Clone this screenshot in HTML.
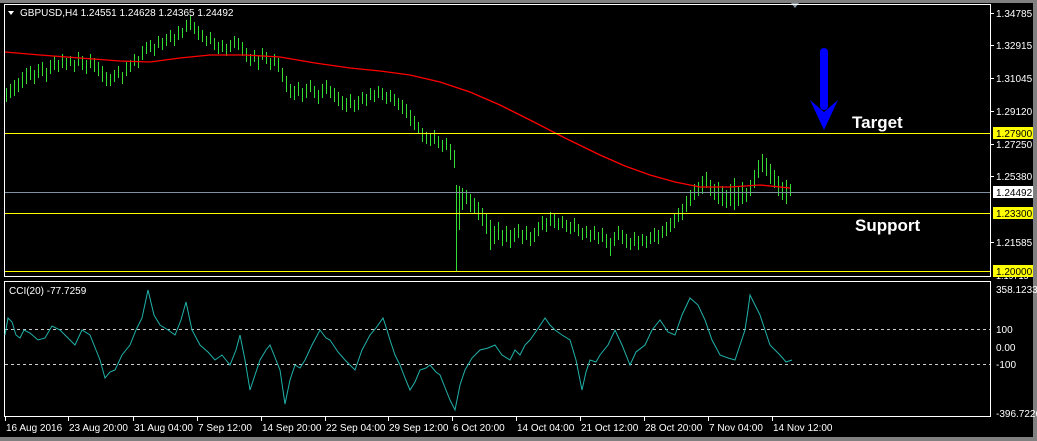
<!DOCTYPE html>
<html><head><meta charset="utf-8"><style>
html,body{margin:0;padding:0;background:#000;width:1037px;height:441px;overflow:hidden}
svg{display:block}
text{font-family:"Liberation Sans",Arial,sans-serif;font-size:10px;fill:#fff}
.k{fill:#000}
</style></head><body>
<svg width="1037" height="441" xmlns="http://www.w3.org/2000/svg">
<rect width="1037" height="441" fill="#000"/>
<rect x="0" y="0" width="1037" height="3" fill="#808080"/>
<rect x="1033" y="0" width="4" height="441" fill="#808080"/>
<rect x="0" y="437" width="1037" height="4" fill="#808080"/>
<polygon points="791,3 799,3 795,8" fill="#8a9aa8"/>
<path transform="translate(0.5,0)" fill="none" stroke="#33dd33" stroke-width="1" d="M6 88V102 M10 84V98 M14 80V96 M18 78V92 M22 72V88 M26 68V84 M30 66V80 M34 70V84 M38 64V78 M42 62V76 M46 68V82 M50 60V74 M54 56V70 M58 60V72 M62 54V68 M66 58V70 M70 56V66 M74 60V72 M78 52V66 M82 56V70 M86 60V74 M90 54V68 M94 58V72 M98 62V76 M102 66V82 M106 72V86 M110 74V86 M114 70V82 M118 66V78 M122 72V84 M126 62V76 M130 60V72 M134 54V66 M138 56V68 M142 46V60 M146 42V54 M150 40V52 M154 44V56 M158 36V48 M162 38V50 M166 34V46 M170 30V42 M174 34V46 M178 26V40 M182 28V38 M186 20V32 M190 16V30 M194 22V34 M198 26V40 M202 30V42 M206 36V46 M210 32V44 M214 38V50 M218 42V54 M222 40V52 M226 44V56 M230 40V52 M234 36V48 M238 38V50 M242 42V56 M246 48V62 M250 54V66 M254 50V62 M258 56V70 M262 48V60 M266 52V64 M270 58V70 M274 54V66 M278 58V72 M282 68V82 M286 76V92 M290 84V98 M294 86V100 M298 82V96 M302 88V102 M306 84V98 M310 80V92 M314 86V98 M318 90V104 M322 84V98 M326 80V94 M330 86V98 M334 88V102 M338 92V106 M342 96V110 M346 98V112 M350 94V108 M354 100V112 M358 96V110 M362 92V104 M366 94V106 M370 88V100 M374 90V102 M378 86V98 M382 88V100 M386 92V104 M390 90V102 M394 94V106 M398 98V110 M402 100V114 M406 104V118 M410 110V126 M414 116V130 M418 122V134 M422 128V142 M426 132V144 M430 134V146 M434 130V144 M438 136V148 M442 140V152 M446 138V150 M450 144V160 M454 150V168 M456 185V271 M459 186V230 M462 188V210 M466 190V204 M470 194V212 M474 198V214 M478 202V220 M482 208V226 M486 214V234 M490 220V250 M494 226V244 M498 222V240 M502 230V246 M506 226V242 M510 230V248 M514 228V242 M518 224V238 M522 230V244 M526 226V240 M530 232V246 M534 228V242 M538 222V236 M542 216V230 M546 218V232 M550 212V226 M554 214V228 M558 218V230 M562 216V228 M566 220V232 M570 222V234 M574 218V232 M578 224V236 M582 228V240 M586 226V238 M590 230V242 M594 226V240 M598 232V244 M602 228V242 M606 234V248 M610 238V256 M614 232V246 M618 226V240 M622 230V244 M626 234V248 M630 238V250 M634 232V246 M638 236V250 M642 234V246 M646 236V248 M650 232V244 M654 228V242 M658 230V244 M662 226V238 M666 222V236 M670 218V232 M674 214V228 M678 208V222 M682 204V220 M686 196V212 M690 190V206 M694 184V200 M698 182V196 M702 176V194 M706 172V188 M710 180V196 M714 184V200 M718 182V204 M722 186V206 M726 190V208 M730 184V206 M734 178V210 M738 186V206 M742 182V204 M746 188V202 M750 180V196 M754 170V188 M758 160V178 M762 154V172 M766 158V176 M770 164V184 M774 170V188 M778 176V196 M782 182V200 M786 180V204 M790 184V196"/>
<polyline fill="none" stroke="#ff0000" stroke-width="1.3" points="5,52 40,55 80,58 120,61 150,62 180,58 210,55 245,55 280,57 315,63 350,68 380,71 410,75 440,82 470,92 500,105 530,120 565,138 600,155 625,166 650,175 675,182 700,187 730,187 760,185 790,188"/>
<line x1="5" y1="133.5" x2="990" y2="133.5" stroke="#ffff00"/>
<line x1="5" y1="213.5" x2="990" y2="213.5" stroke="#ffff00"/>
<line x1="5" y1="271.5" x2="990" y2="271.5" stroke="#ffff00"/>
<line x1="5" y1="192.5" x2="990" y2="192.5" stroke="#8090a0"/>
<rect x="4.5" y="4.5" width="986" height="272" fill="none" stroke="#fff"/>
<rect x="4.5" y="281.5" width="986" height="135" fill="none" stroke="#fff"/>
<polygon points="8,11 14,11 11,15" fill="#fff"/>
<text x="20" y="16">GBPUSD,H4  1.24551 1.24628 1.24365 1.24492</text>
<text x="9" y="294">CCI(20) -77.7259</text>
<line x1="5" y1="329.5" x2="990" y2="329.5" stroke="#ccc" stroke-dasharray="3,3"/>
<line x1="5" y1="364.5" x2="990" y2="364.5" stroke="#ccc" stroke-dasharray="3,3"/>
<polyline fill="none" stroke="#20b2aa" stroke-width="1" points="5,335 8,318 12,322 16,335 20,338 24,330 30,333 38,340 45,338 52,326 60,330 68,338 75,345 82,330 90,335 96,350 100,360 105,378 110,372 115,370 122,355 130,345 136,330 142,318 148,290 154,315 160,325 168,330 175,335 181,320 186,302 192,330 200,345 208,352 215,360 222,355 230,365 236,350 240,335 245,360 250,390 255,375 260,360 266,350 270,345 276,360 280,370 285,404 290,380 295,365 300,368 305,360 312,345 320,330 326,338 330,340 338,352 345,360 350,365 355,370 362,350 370,335 376,328 383,318 387,330 390,340 395,355 400,365 405,378 410,390 415,382 420,370 426,368 430,365 436,372 440,375 446,390 450,400 455,410 460,385 465,370 472,358 480,350 488,348 495,345 502,355 510,360 515,350 520,355 525,345 530,340 537,330 545,318 550,325 555,330 562,335 570,340 576,360 582,390 586,372 590,360 596,362 600,355 608,345 615,330 622,345 630,365 636,352 645,345 652,330 660,320 668,332 675,335 682,315 690,298 698,305 705,320 712,340 720,355 728,358 735,360 740,345 745,330 748,310 750,295 755,305 760,315 765,330 770,345 775,350 780,355 786,362 792,360"/>
<rect x="820" y="48" width="8" height="62" rx="4" fill="#0000ff"/>
<polygon points="810,100 824,112 838,100 824,130" fill="#0000ff"/>
<text x="852" y="128" style="font-size:17px;font-weight:bold">Target</text>
<text x="855" y="231" style="font-size:17px;font-weight:bold">Support</text>
<g stroke="#fff">
<line x1="990" x2="994" y1="13.5" y2="13.5"/><line x1="990" x2="994" y1="45.5" y2="45.5"/><line x1="990" x2="994" y1="78.5" y2="78.5"/><line x1="990" x2="994" y1="111.5" y2="111.5"/><line x1="990" x2="994" y1="144.5" y2="144.5"/><line x1="990" x2="994" y1="176.5" y2="176.5"/><line x1="990" x2="994" y1="242.5" y2="242.5"/>
</g>
<text x="996" y="17">1.34785</text>
<text x="996" y="49">1.32915</text>
<text x="996" y="82">1.31045</text>
<text x="996" y="115">1.29120</text>
<text x="996" y="148">1.27250</text>
<text x="996" y="180">1.25380</text>
<text x="996" y="246">1.21585</text>
<text x="996" y="279" style="font-size:9px">1.19715</text>
<rect x="993" y="127" width="40" height="12" fill="#ffff00"/><text class="k" x="996" y="137">1.27900</text>
<rect x="993" y="186" width="40" height="12" fill="#fff"/><text class="k" x="996" y="196">1.24492</text>
<rect x="993" y="207" width="40" height="12" fill="#ffff00"/><text class="k" x="996" y="217">1.23300</text>
<rect x="993" y="265" width="40" height="12" fill="#ffff00"/><text class="k" x="996" y="275">1.20000</text>
<text x="996" y="293">358.1233</text>
<text x="996" y="333">100</text>
<text x="996" y="351">0.00</text>
<text x="996" y="368">-100</text>
<text x="996" y="417">-396.7226</text>
<g stroke="#fff">
<line x1="5.5" x2="5.5" y1="417" y2="421"/><line x1="68.5" x2="68.5" y1="417" y2="421"/><line x1="133.5" x2="133.5" y1="417" y2="421"/><line x1="197.5" x2="197.5" y1="417" y2="421"/><line x1="261.5" x2="261.5" y1="417" y2="421"/><line x1="325.5" x2="325.5" y1="417" y2="421"/><line x1="388.5" x2="388.5" y1="417" y2="421"/><line x1="452.5" x2="452.5" y1="417" y2="421"/><line x1="516.5" x2="516.5" y1="417" y2="421"/><line x1="580.5" x2="580.5" y1="417" y2="421"/><line x1="644.5" x2="644.5" y1="417" y2="421"/><line x1="708.5" x2="708.5" y1="417" y2="421"/><line x1="772.5" x2="772.5" y1="417" y2="421"/>
</g>
<text x="6" y="431">16 Aug 2016</text>
<text x="69" y="431">23 Aug 20:00</text>
<text x="134" y="431">31 Aug 04:00</text>
<text x="198" y="431">7 Sep 12:00</text>
<text x="262" y="431">14 Sep 20:00</text>
<text x="326" y="431">22 Sep 04:00</text>
<text x="389" y="431">29 Sep 12:00</text>
<text x="453" y="431">6 Oct 20:00</text>
<text x="517" y="431">14 Oct 04:00</text>
<text x="581" y="431">21 Oct 12:00</text>
<text x="645" y="431">28 Oct 20:00</text>
<text x="709" y="431">7 Nov 04:00</text>
<text x="773" y="431">14 Nov 12:00</text>
</svg>
</body></html>
